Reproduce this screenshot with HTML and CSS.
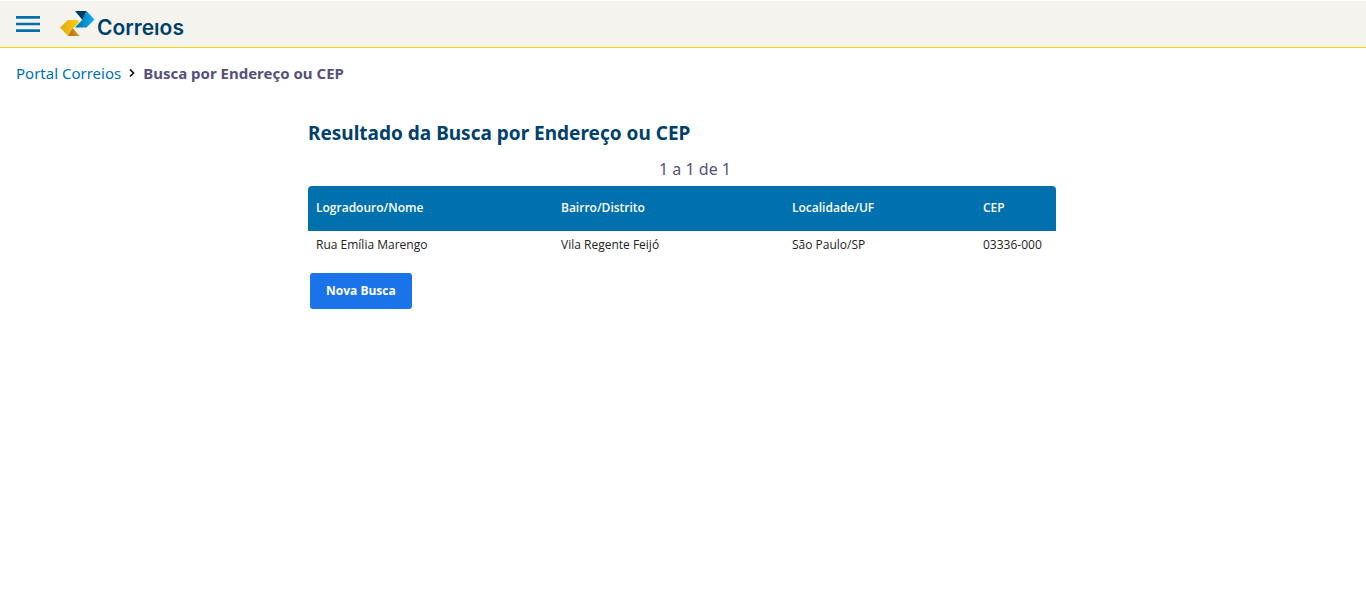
FILE: index.html
```html
<!DOCTYPE html>
<html lang="pt-BR">
<head>
<meta charset="utf-8">
<meta name="viewport" content="width=device-width, initial-scale=1">
<title>Busca por Endereço ou CEP</title>
<link rel="stylesheet" href="styles.css">
</head>
<body>
<header class="topbar">
  <button class="menu" type="button" aria-label="Menu">
    <svg width="24" height="16" viewBox="0 0 24 16" aria-hidden="true"><path d="M0 0h24v2.660H0zM0 6.660h24v2.660H0zM0 13.330h24v2.660H0z" fill="#0071ad"/></svg>
  </button>
  <a class="logo" href="#">
    <svg class="logo-mark" width="35" height="26" viewBox="0 0 35 26" aria-hidden="true">
      <defs>
        <linearGradient id="gold" x1="0" y1="0" x2="1" y2="0"><stop offset="0" stop-color="#e0a81c"/><stop offset="1" stop-color="#ffd000"/></linearGradient>
        <linearGradient id="bronze" x1="0" y1="0" x2="1" y2="0"><stop offset="0" stop-color="#b5700f"/><stop offset="1" stop-color="#e0951c"/></linearGradient>
        <linearGradient id="sky" x1="0" y1="0" x2="1" y2="0"><stop offset="0" stop-color="#006ba8"/><stop offset="1" stop-color="#0ab4f5"/></linearGradient>
      </defs>
      <path d="M8 9H17L19.500 11L12 18L8 25L0 16.500Z" fill="url(#gold)"/>
      <path d="M8 25L12.500 17L19.500 25Z" fill="url(#bronze)"/>
      <path d="M15 0H26.500L22.500 9Z" fill="#003a63"/>
      <path d="M26.500 0L34.500 8.500L26.500 16.500H15L22.500 8.500Z" fill="url(#sky)"/>
    </svg>
    <span class="logo-word">Correıos</span>
  </a>
</header>
<nav class="crumbs" aria-label="Navegação">
  <a href="#">Portal Correios</a>
  <svg width="6" height="8" viewBox="0 0 6 8" aria-hidden="true"><path d="M1 .5L4.500 4L1 7.500" fill="none" stroke="#111" stroke-width="1.600"/></svg>
  <span class="current">Busca por Endereço ou CEP</span>
</nav>
<main class="content">
  <h1>Resultado da Busca por Endereço ou CEP</h1>
  <p class="count">1 a 1 de 1</p>
  <table class="results">
    <colgroup><col class="c-street"><col class="c-area"><col class="c-city"><col class="c-code"></colgroup>
    <thead><tr><th scope="col">Logradouro/Nome</th><th scope="col">Bairro/Distrito</th><th scope="col">Localidade/UF</th><th scope="col">CEP</th></tr></thead>
    <tbody><tr><td>Rua Emília Marengo</td><td>Vila Regente Feijó</td><td>São Paulo/SP</td><td>03336-000</td></tr></tbody>
  </table>
  <button class="new-search" type="button">Nova Busca</button>
</main>
</body>
</html>
```
FILE: styles.css
```css
* { box-sizing: border-box; }
body { margin: 0; background: #fff; color: #222; font-family: "Trebuchet MS", "Noto Sans", sans-serif; font-size: 15px; line-height: 20px; }
a { color: #0071ad; text-decoration: none; }
.topbar { display: flex; align-items: center; gap: 20px; height: 48px; padding: 0 16px; background: #f4f3ee; border-top: 1px solid #fff; border-bottom: 1px solid #ffd400; }
.menu { display: flex; padding: 0; border: 0; background: none; cursor: pointer; }
.logo { display: flex; align-items: center; gap: 2px; color: #00416b; }
.logo-word { padding-top: 8px; font: 600 21px/24px Inter, sans-serif; }
.crumbs { display: flex; align-items: center; gap: 8px; padding: 15px 16px; }
.current { color: #55517b; font-weight: 700; }
.content { max-width: 750px; margin: 22px auto 0; padding-right: 2px; }
h1 { margin: 0; color: #00416b; font-size: 19px; line-height: 26px; font-weight: 700; }
.count { margin: 13px 0 7px; padding-left: 26px; text-align: center; color: #55517b; font-size: 16px; }
.results { width: 100%; border-collapse: collapse; table-layout: fixed; font: 12px/18px "Trebuchet MS", "Open Sans", sans-serif; text-align: left; }
.results th { height: 45px; padding: 0 8px 2px; background: #0071ad; color: #fff; font-weight: 600; }
.results th:first-child { border-top-left-radius: 4px; }
.results th:last-child { border-top-right-radius: 4px; }
.results td { height: 28px; padding: 0 8px; }
.c-street { width: 245px; }
.c-area { width: 231px; }
.c-city { width: 191px; }
.c-code { width: auto; }
.new-search { height: 36px; margin: 14px 2px; padding: 0 16px; border: 0; border-radius: 3px; background: #1a73e8; color: #fff; font: 700 12px/20px "Trebuchet MS", "Open Sans", sans-serif; cursor: pointer; }
```
